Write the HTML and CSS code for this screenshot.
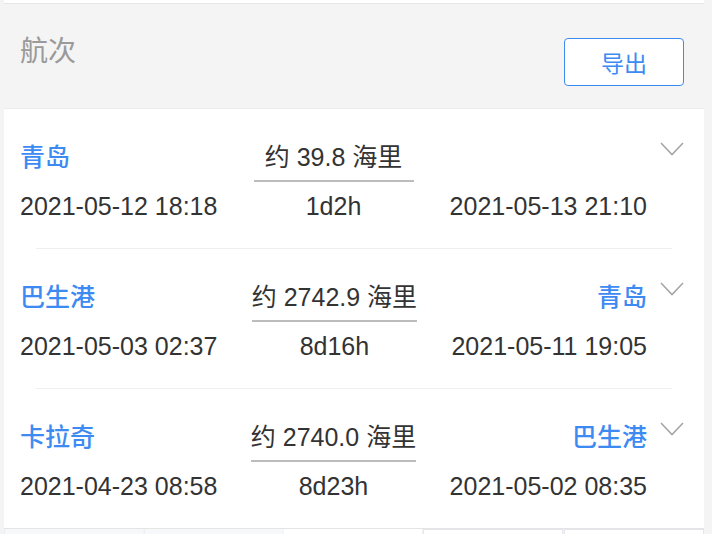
FILE: index.html
```html
<!DOCTYPE html>
<html lang="zh">
<head>
<meta charset="utf-8">
<link rel="stylesheet" href="styles.css">
</head>
<body>
<div class="page">
  <div class="top-strip"></div>
  <div class="header">
    <div class="title">航次</div>
    <button class="export-btn">导出</button>
  </div>
  <div class="card">
    <div class="voyage">
      <div class="voyage-main">
        <div class="col col-left">
          <div class="cell-top port">青岛</div>
          <div class="cell-bottom">2021-05-12 18:18</div>
        </div>
        <div class="col col-mid">
          <div class="cell-top dist">约 39.8 海里</div>
          <div class="cell-bottom">1d2h</div>
        </div>
        <div class="col col-right">
          <div class="cell-top port"></div>
          <div class="cell-bottom">2021-05-13 21:10</div>
        </div>
      </div>
      <svg class="chev" width="24" height="14" viewBox="0 0 24 14"><polyline points="1,1 12,12.5 23,1" fill="none" stroke="#a6a6a6" stroke-width="1.6"/></svg>
    </div>
    <div class="divider"></div>
    <div class="voyage">
      <div class="voyage-main">
        <div class="col col-left">
          <div class="cell-top port">巴生港</div>
          <div class="cell-bottom">2021-05-03 02:37</div>
        </div>
        <div class="col col-mid">
          <div class="cell-top dist">约 2742.9 海里</div>
          <div class="cell-bottom">8d16h</div>
        </div>
        <div class="col col-right">
          <div class="cell-top port">青岛</div>
          <div class="cell-bottom">2021-05-11 19:05</div>
        </div>
      </div>
      <svg class="chev" width="24" height="14" viewBox="0 0 24 14"><polyline points="1,1 12,12.5 23,1" fill="none" stroke="#a6a6a6" stroke-width="1.6"/></svg>
    </div>
    <div class="divider"></div>
    <div class="voyage">
      <div class="voyage-main">
        <div class="col col-left">
          <div class="cell-top port">卡拉奇</div>
          <div class="cell-bottom">2021-04-23 08:58</div>
        </div>
        <div class="col col-mid">
          <div class="cell-top dist">约 2740.0 海里</div>
          <div class="cell-bottom">8d23h</div>
        </div>
        <div class="col col-right">
          <div class="cell-top port">巴生港</div>
          <div class="cell-bottom">2021-05-02 08:35</div>
        </div>
      </div>
      <svg class="chev" width="24" height="14" viewBox="0 0 24 14"><polyline points="1,1 12,12.5 23,1" fill="none" stroke="#a6a6a6" stroke-width="1.6"/></svg>
    </div>
  </div>
  <div class="tabs">
    <div class="tab tab-gray"></div>
    <div class="tab tab-gray"></div>
    <div class="tab tab-white"></div>
    <div class="tab tab-edge"></div>
    <div class="tab tab-edge"></div>
  </div>
</div>
</body>
</html>
```
FILE: styles.css
```css
html, body {
  margin: 0;
  padding: 0;
  background: #f4f4f4;
  height: 534px;
  overflow: hidden;
}
body {
  font-family: "Liberation Sans", "Noto Sans CJK SC", sans-serif;
  color: #333;
}
.page {
  padding: 0 8px 0 4px;
}
.top-strip {
  height: 3px;
  background: #fff;
  border-bottom: 1px solid #e6e6e6;
}
.header {
  height: 104px;
  box-sizing: border-box;
  padding: 28px 20px 0 16px;
  display: flex;
  justify-content: space-between;
  align-items: flex-start;
}
.title {
  font-size: 28px;
  line-height: 40px;
  color: #9a9a9a;
}
.export-btn {
  margin-top: 6px;
  width: 120px;
  height: 48px;
  box-sizing: border-box;
  border: 1px solid #3d8bf2;
  border-radius: 4px;
  background: #fff;
  color: #3d8bf2;
  font-family: "Liberation Sans", "Noto Sans CJK SC", sans-serif;
  font-size: 23px;
  padding: 0;
}
.card {
  background: #fff;
  border-top: 1px solid #ececec;
  border-bottom: 1px solid #e4e4e4;
}
.voyage {
  display: flex;
  align-items: flex-start;
  gap: 13px;
  padding: 26px 20px 20px 16px;
}
.voyage-main {
  flex: 1;
  display: flex;
  justify-content: space-between;
  font-size: 25px;
}
.col {
  display: flex;
  flex-direction: column;
}
.col-mid {
  align-items: center;
}
.col-right {
  align-items: flex-end;
}
.cell-top {
  height: 47px;
  line-height: 45px;
  box-sizing: border-box;
  white-space: nowrap;
}
.cell-bottom {
  margin-top: 2px;
  line-height: 44px;
  white-space: nowrap;
}
.port {
  color: #3d8bf2;
  font-weight: 500;
}
.dist {
  min-width: 160px;
  text-align: center;
  border-bottom: 2px solid #bcbcbc;
}
.chev {
  margin-top: 7px;
  flex-shrink: 0;
}
.divider {
  height: 1px;
  background: #efefef;
  margin: 0 32px;
}
.tabs {
  display: flex;
  height: 7px;
  gap: 1px;
}
.tab {
  flex: 1;
}
.tab-gray {
  background: #f7f8fa;
  border-left: 1px solid #eceef2;
}
.tab-white {
  background: #fff;
}
.tab-edge {
  background: #fff;
  border: 1px solid #e4e6ec;
  border-bottom: none;
}
```
